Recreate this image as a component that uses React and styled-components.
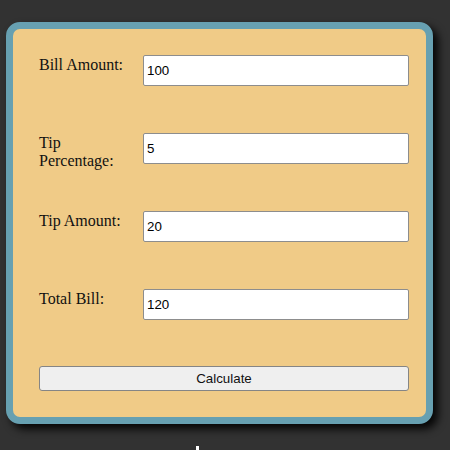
import React, { useState } from 'react';
import styled, { createGlobalStyle } from 'styled-components';

const GlobalStyle = createGlobalStyle`
  html, body {
    margin: 0;
    padding: 0;
    background-color: #323232;
    height: 100%;
    overflow: hidden;
  }
`;

const Page = styled.div`
  padding: 22px 0 0 6px;
`;

const Card = styled.form`
  box-sizing: border-box;
  width: 427px;
  height: 402px;
  border: 7px solid #67a0b1;
  border-radius: 14px;
  background-color: #f0cb87;
  box-shadow: 5px 5px 8px rgba(0, 0, 0, 0.9);
  padding: 26px 17px 26px 26px;
  display: grid;
  grid-template-columns: 92px 1fr;
  grid-auto-rows: 78px;
  column-gap: 12px;
  align-items: start;
`;

const Label = styled.label`
  font-family: "Liberation Serif", "Times New Roman", serif;
  font-size: 16px;
  line-height: 18px;
  color: #111;
  padding-top: 1px;
`;

const Input = styled.input`
  box-sizing: border-box;
  width: 100%;
  height: 31px;
  margin: 0;
  padding: 1px 3px;
  border: 1px solid #8d8d8d;
  border-radius: 2px;
  background: #fff;
  font-family: "Liberation Sans", Arial, sans-serif;
  font-size: 13.33px;
  color: #000;
  outline: none;
`;

const Button = styled.button`
  grid-column: 1 / -1;
  box-sizing: border-box;
  height: 25px;
  margin-top: -1px;
  border: 1px solid #858585;
  border-radius: 3px;
  background: #efefef;
  font-family: "Liberation Sans", Arial, sans-serif;
  font-size: 13.33px;
  color: #111;
  cursor: pointer;
`;

const Marker = styled.div`
  width: 3px;
  height: 6px;
  margin: 22px 0 0 190px;
  background: #fff;
`;

export default function App() {
  const [bill, setBill] = useState('100');
  const [pct, setPct] = useState('5');
  const [tip, setTip] = useState('20');
  const [total, setTotal] = useState('120');

  const calculate = (e) => {
    e.preventDefault();
    const t = (parseFloat(bill) || 0) * (parseFloat(pct) || 0) / 100;
    setTip(String(t));
    setTotal(String((parseFloat(bill) || 0) + t));
  };

  return (
    <Page>
      <GlobalStyle />
      <Card onSubmit={calculate}>
        <Label>Bill Amount:</Label>
        <Input value={bill} onChange={(e) => setBill(e.target.value)} />
        <Label>Tip Percentage:</Label>
        <Input value={pct} onChange={(e) => setPct(e.target.value)} />
        <Label>Tip Amount:</Label>
        <Input value={tip} onChange={(e) => setTip(e.target.value)} />
        <Label>Total Bill:</Label>
        <Input value={total} onChange={(e) => setTotal(e.target.value)} />
        <Button type="submit">Calculate</Button>
      </Card>
      <Marker />
    </Page>
  );
}
